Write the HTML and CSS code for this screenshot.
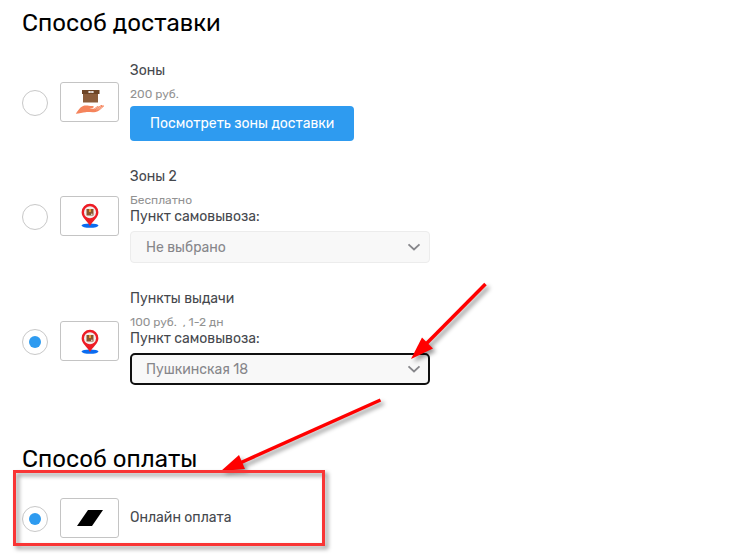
FILE: index.html
```html
<!DOCTYPE html>
<html lang="ru">
<head>
    <meta charset="UTF-8">
    <meta name="viewport" content="width=device-width, initial-scale=1.0">
    <title>Оформление заказа</title>
    <link rel="stylesheet" href="styles.css">
</head>
<body>
    <!-- shared icons -->
    <svg class="sprite" aria-hidden="true">
        <symbol id="pin" viewBox="0 0 18 25">
            <ellipse cx="9" cy="22.600" rx="8.500" ry="2.200" fill="#0b6cf0"/>
            <path d="M9 23C6.500 18 .6 14.500.6 9.200A8.400 8.400 0 0 1 17.400 9.200C17.400 14.500 11.500 18 9 23Z" fill="#ee1c25"/>
            <circle cx="9" cy="9.200" r="6" fill="#f3eeee"/>
            <rect x="5.500" y="6" width="7" height="6.500" fill="#8a562f"/>
            <path d="M8 6h2v3H8z" fill="#e79a35"/>
            <path d="M10 10.700h1.600v1H10z" fill="#f3eeee"/>
        </symbol>
        <symbol id="chevron" viewBox="0 0 14 8">
            <path d="M1.500 1.300 7 6.500l5.500-5.200" fill="none" stroke="#86868a" stroke-width="1.800"/>
        </symbol>
    </svg>

    <form class="checkout">
        <section class="section">
            <h2>Способ доставки</h2>
            <div class="option">
                <input type="radio" name="delivery" id="zones">
                <span class="picture">
                    <svg width="30" height="26" viewBox="0 0 30 26" aria-hidden="true">
                        <path d="M8 4h15v9.500H8z" fill="#8b5d3b"/>
                        <path d="M7 1h17.500v4H7z" fill="#6d4526"/>
                        <path d="M13.500 2h5v2h-5z" fill="#fff"/>
                        <path d="M15.200 2v2M16.900 2v2" stroke="#6d4526" stroke-width=".5"/>
                        <path d="M.8 24.800C3 21.500 5.500 17.300 9.500 16.500c3-.5 5 .8 8 .6 1.800 0 1.700 1.800 0 2l-3.200.5 4.500.1 3.400-2.500c1-.6 1.600 0 1 .7l3-1.800c1-.5 1.700.1 1 .8l1-.4c.9-.2 1.200.4.5 1.100-2.600 2.500-5 4.800-8 5.400-3.500.7-7-.2-10 .2-3 .3-6.500 1.300-9.900 1.600Z" fill="#f5845c"/>
                        <path d="m19.500 20 3.600-2.200m-1.600 2.900 4.600-3.500m-2.600 3.500 4-3" stroke="#fff" stroke-width=".4" fill="none"/>
                    </svg>
                </span>
                <div class="info">
                    <label class="title" for="zones">Зоны</label>
                    <p class="price">200 руб.</p>
                    <button type="button" class="zones-btn">Посмотреть зоны доставки</button>
                </div>
            </div>
            <div class="option">
                <input type="radio" name="delivery" id="zones2">
                <span class="picture"><svg width="18" height="25" aria-hidden="true"><use href="#pin"/></svg></span>
                <div class="info">
                    <label class="title" for="zones2">Зоны 2</label>
                    <p class="price">Бесплатно</p>
                    <label class="point-label" for="point2">Пункт самовывоза:</label>
                    <div class="select-wrap">
                        <select id="point2">
                            <option>Не выбрано</option>
                            <option>Пушкинская 18</option>
                        </select>
                        <svg class="arrow" width="14" height="8" aria-hidden="true"><use href="#chevron"/></svg>
                    </div>
                </div>
            </div>
            <div class="option">
                <input type="radio" name="delivery" id="points" checked>
                <span class="picture"><svg width="18" height="25" aria-hidden="true"><use href="#pin"/></svg></span>
                <div class="info info-points">
                    <label class="title" for="points">Пункты выдачи</label>
                    <p class="price">100 руб. &nbsp;, 1-2 дн</p>
                    <label class="point-label" for="point3">Пункт самовывоза:</label>
                    <div class="select-wrap">
                        <select id="point3" class="active">
                            <option>Не выбрано</option>
                            <option selected>Пушкинская 18</option>
                        </select>
                        <svg class="arrow" width="14" height="8" aria-hidden="true"><use href="#chevron"/></svg>
                    </div>
                </div>
            </div>
        </section>

        <section class="section">
            <h2>Способ оплаты</h2>
            <div class="option">
                <input type="radio" name="payment" id="online" checked>
                <span class="picture">
                    <svg width="26" height="16" viewBox="0 0 26 16" aria-hidden="true"><path d="M11 0h15L15 16H0Z" fill="#000"/></svg>
                </span>
                <div class="info">
                    <label class="title" for="online">Онлайн оплата</label>
                </div>
            </div>
        </section>
    </form>

    <!-- hint arrows and frame over the form -->
    <svg class="hints" width="740" height="560" viewBox="0 0 740 560" aria-hidden="true">
        <g class="hint">
            <path d="M485.500 284 425 345" stroke="#f00" stroke-width="3.500"/>
            <path d="m411 359 11-21.500 11 11Z" fill="#f00"/>
        </g>
        <g class="hint">
            <path d="M380.500 400 240 463" stroke="#f00" stroke-width="3.500"/>
            <path d="m221 471 18-16 6 14Z" fill="#f00"/>
        </g>
        <rect class="hint" x="14.500" y="471.500" width="309" height="73" fill="none" stroke="#f93535" stroke-width="3"/>
    </svg>
</body>
</html>
```
FILE: styles.css
```css
* {
    box-sizing: border-box;
    margin: 0;
    padding: 0;
}

body {
    position: relative;
    min-height: 100vh;
    background: #fff;
    color: #45484d;
    font-family: Rubik, Roboto, sans-serif;
    font-size: 14px;
    line-height: 16px;
}

.sprite {
    display: none;
}

.checkout {
    padding: 8px 22px 0;
}

.section {
    margin-bottom: 52px;
}

.section:last-child {
    margin-bottom: 0;
}

h2 {
    color: #000;
    font-size: 24px;
    font-weight: 400;
    line-height: 30px;
    margin-bottom: 24px;
}

.option {
    display: flex;
    align-items: center;
    margin-bottom: 27px;
}

.option:last-child {
    margin-bottom: 0;
}

input[type="radio"] {
    appearance: none;
    flex: none;
    display: grid;
    place-items: center;
    width: 26px;
    height: 26px;
    margin: 2px 12px 0 0;
    border: 1px solid #c8c8c8;
    border-radius: 50%;
}

input[type="radio"]:checked::before {
    content: "";
    width: 12px;
    height: 12px;
    border-radius: 50%;
    background: #2e9bf0;
}

.picture {
    flex: none;
    display: flex;
    align-items: center;
    justify-content: center;
    width: 59px;
    height: 40px;
    margin-right: 11px;
    border: 1px solid #c4c4c4;
    border-radius: 3px;
}

.info {
    flex: 1;
}

.info-points {
    padding-bottom: 7px;
}

.title,
.point-label {
    display: block;
    line-height: 18px;
}

.price {
    margin-top: 6px;
    color: #929292;
    font-size: 12px;
}

.zones-btn {
    display: block;
    margin-top: 4px;
    height: 35px;
    padding: 0 20px;
    border: none;
    border-radius: 4px;
    background: #2e9bf0;
    color: #fff;
    font-family: inherit;
    font-size: 14px;
}

.select-wrap {
    position: relative;
    max-width: 300px;
    margin-top: 5px;
}

select {
    appearance: none;
    display: block;
    width: 100%;
    height: 32px;
    padding: 0 15px;
    border: 1px solid #ececec;
    border-radius: 4px;
    background: #f8f8f8;
    color: #86868a;
    font-family: inherit;
    font-size: 14px;
}

select.active {
    padding: 0 14px;
    border: 2px solid #101010;
    border-radius: 5px;
}

.arrow {
    position: absolute;
    top: 12px;
    right: 9px;
    pointer-events: none;
}

.hints {
    position: absolute;
    top: 0;
    left: 0;
    pointer-events: none;
}

.hint {
    filter: drop-shadow(3px 3px 2px rgba(0, 0, 0, 0.4));
}
```
